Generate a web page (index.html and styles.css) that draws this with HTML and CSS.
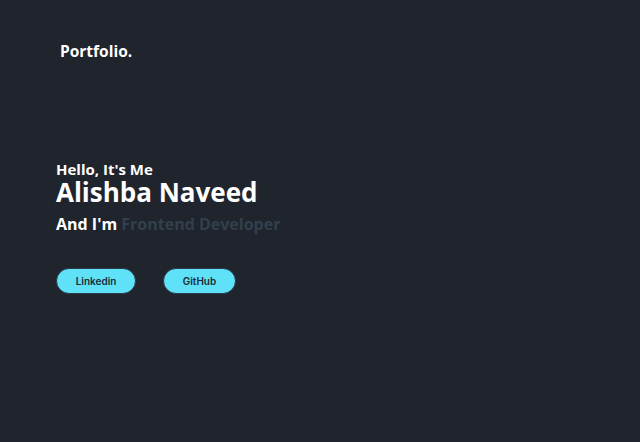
FILE: index.html
```html
<!DOCTYPE html>
<html lang="en">
<head>
<meta charset="utf-8">
<title>Portfolio</title>
<link rel="stylesheet" href="styles.css">
</head>
<body>
<header class="header">
  <a class="logo" href="#">Portfolio.</a>
</header>
<section class="home">
  <div class="home-content">
    <h3 class="greet">Hello, It's Me</h3>
    <h1 class="name">Alishba Naveed</h1>
    <h3 class="role">And I'm <span class="role-accent">Frontend Developer</span></h3>
    <div class="buttons">
      <a class="btn" href="#">Linkedin</a>
      <a class="btn" href="#">GitHub</a>
    </div>
  </div>
</section>
</body>
</html>
```

FILE: styles.css
```css
* { margin: 0; padding: 0; box-sizing: border-box; }
html, body { height: 100%; }
body {
  background: #1f242d;
  color: #fff;
  font-family: "Open Sans", "Segoe UI", sans-serif;
}
.header {
  padding: 40px 60px 0;
}
.logo {
  display: inline-block;
  color: #fff;
  text-decoration: none;
  font-size: 15.5px;
  font-weight: 700;
  line-height: 20px;
}
.home {
  padding: 97px 56px 0;
}
.greet {
  font-size: 15px;
  font-weight: 700;
  line-height: 20px;
}
.name {
  font-size: 26px;
  font-weight: 700;
  line-height: 26px;
}
.role {
  font-size: 16px;
  font-weight: 700;
  line-height: 22px;
  margin-top: 8px;
}
.role-accent { color: #32404c; }
.buttons {
  display: flex;
  gap: 27px;
  margin-top: 33px;
}
.btn {
  display: inline-flex;
  align-items: center;
  justify-content: center;
  height: 26px;
  border-radius: 13px;
  background: #5fe1f7;
  border: 1px solid #2a3a48;
  color: #1a2a38;
  text-decoration: none;
  font-family: Inter, sans-serif;
  font-size: 10px;
  font-weight: 600;
}
.btn:first-child { width: 80px; }
.btn:last-child { width: 73px; }
```
